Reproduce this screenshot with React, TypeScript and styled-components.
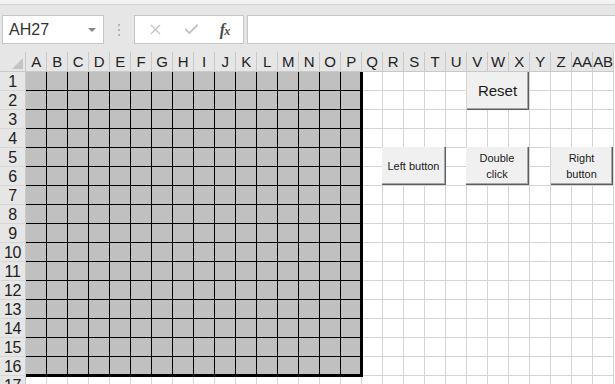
import React from "react";
import styled, { createGlobalStyle } from "styled-components";
import { X, Check } from "lucide-react";

const GlobalStyle = createGlobalStyle`
  html, body { margin: 0; padding: 0; background: #ffffff; }
  body { font-family: "Liberation Sans", Arial, sans-serif; }
  * { box-sizing: border-box; }
`;

const Page = styled.div`
  width: 615px;
  height: 384px;
  overflow: hidden;
  display: flex;
  flex-direction: column;
  background: #ffffff;
`;

const TitleStrip = styled.div`
  height: 5px;
  background: #f3f3f3;
  border-bottom: 1px solid #d4d4d4;
  flex: none;
`;

const Toolbar = styled.div`
  flex: none;
  height: 47px;
  background: #e6e6e6;
  display: flex;
  align-items: flex-start;
  padding: 10px 0 0 2px;
`;

const NameBox = styled.div`
  width: 102px;
  height: 29px;
  background: #ffffff;
  border: 1px solid #c6c6c6;
  display: flex;
  align-items: center;
  justify-content: space-between;
  padding: 0 7px 0 6px;
  font-size: 16px;
  color: #333333;
`;

const Caret = styled.span`
  width: 0;
  height: 0;
  border-left: 4px solid transparent;
  border-right: 4px solid transparent;
  border-top: 4px solid #858585;
`;

const Grip = styled.div`
  width: 30px;
  height: 29px;
  display: flex;
  flex-direction: column;
  align-items: center;
  justify-content: center;
  gap: 3px;
`;

const GripDot = styled.span`
  width: 2px;
  height: 2px;
  background: #b4b4b4;
`;

const FxBox = styled.div`
  width: 110px;
  height: 29px;
  background: #ffffff;
  border: 1px solid #c6c6c6;
  display: flex;
  align-items: center;
  justify-content: space-around;
  padding: 0 4px 0 2px;
  color: #c2c2c2;
`;

const FxLabel = styled.span`
  font-family: "Liberation Serif", "Times New Roman", serif;
  font-style: italic;
  font-weight: bold;
  font-size: 16px;
  color: #4a4a4a;
  letter-spacing: -1px;
`;

const FxSub = styled.span`
  font-size: 12px;
`;

const FormulaInput = styled.div`
  flex: 1;
  height: 29px;
  margin-left: 3px;
  background: #ffffff;
  border: 1px solid #c6c6c6;
  border-right: none;
`;

const Sheet = styled.div`
  position: relative;
  display: grid;
  grid-template-columns: 26px repeat(28, 21px);
  grid-template-rows: 20px repeat(17, 19px);
  background: #ffffff;
`;

const HeaderCell = styled.div<{ $corner?: boolean }>`
  background: #e6e6e6;
  border-right: 1px solid #c9c9c9;
  border-bottom: 1px solid #c9c9c9;
  display: flex;
  align-items: flex-end;
  justify-content: center;
  padding-bottom: 1px;
  font-size: 15px;
  color: #222222;
  white-space: nowrap;
  overflow: visible;
  letter-spacing: ${(p) => (p.$corner ? "0" : "-0.3px")};
  position: relative;
`;

const CornerTriangle = styled.span`
  position: absolute;
  right: 2px;
  bottom: 2px;
  width: 0;
  height: 0;
  border-left: 11px solid transparent;
  border-bottom: 11px solid #c4c4c4;
`;

const RowHead = styled.div`
  background: #e6e6e6;
  border-right: 1px solid #c9c9c9;
  border-bottom: 1px solid #d6d6d6;
  display: flex;
  align-items: center;
  justify-content: center;
  font-size: 16px;
  color: #222222;
  padding-top: 2px;
  letter-spacing: -0.3px;
`;

const Cell = styled.div<{ $gray: boolean; $thickRight: boolean; $thickBottom: boolean }>`
  background: ${(p) => (p.$gray ? "#c0c0c0" : "transparent")};
  border-right: ${(p) => (p.$thickRight ? "2px" : "1px")} solid
    ${(p) => (p.$gray ? "#000000" : "#d4d4d4")};
  border-bottom: ${(p) => (p.$thickBottom ? "2px" : "1px")} solid
    ${(p) => (p.$gray ? "#000000" : "#d4d4d4")};
  ${(p) =>
    p.$thickRight || p.$thickBottom
      ? `position: relative; z-index: 1; box-shadow: ${p.$thickRight ? "1px" : "0"} ${
          p.$thickBottom ? "1px" : "0"
        } 0 0 #000000${p.$thickRight && p.$thickBottom ? ", 1px 0 0 0 #000000, 0 1px 0 0 #000000" : ""};`
      : ""}
`;

const SheetButton = styled.div<{ $size: number }>`
  position: absolute;
  z-index: 2;
  background: #f0f0f0;
  border-right: 1px solid #5c5c5c;
  border-bottom: 1px solid #5c5c5c;
  box-shadow: inset -1px -1px 0 #a8a8a8;
  display: flex;
  align-items: center;
  justify-content: center;
  text-align: center;
  font-size: ${(p) => p.$size}px;
  line-height: 16px;
  color: #1a1a1a;
  padding: 0 2px;
`;

const columns = [
  "A","B","C","D","E","F","G","H","I","J","K","L","M","N",
  "O","P","Q","R","S","T","U","V","W","X","Y","Z","AA","AB",
];

const buttons = [
  { label: "Reset", left: 467, top: 20, width: 62, height: 38, size: 15 },
  { label: "Left button", left: 382, top: 95, width: 64, height: 38, size: 11 },
  { label: "Double\nclick", left: 466, top: 95, width: 63, height: 38, size: 11 },
  { label: "Right\nbutton", left: 551, top: 95, width: 62, height: 38, size: 11 },
];

export default function App() {
  const rows = Array.from({ length: 17 }, (_, i) => i + 1);
  return (
    <>
      <GlobalStyle />
      <Page>
        <TitleStrip />
        <Toolbar>
          <NameBox>
            <span>AH27</span>
            <Caret />
          </NameBox>
          <Grip>
            <GripDot />
            <GripDot />
            <GripDot />
          </Grip>
          <FxBox>
            <X size={17} strokeWidth={1.6} />
            <Check size={17} strokeWidth={2.6} />
            <FxLabel>
              f<FxSub>x</FxSub>
            </FxLabel>
          </FxBox>
          <FormulaInput />
        </Toolbar>
        <Sheet>
          <HeaderCell $corner>
            <CornerTriangle />
          </HeaderCell>
          {columns.map((c) => (
            <HeaderCell key={c}>{c}</HeaderCell>
          ))}
          {rows.map((r) => (
            <React.Fragment key={r}>
              <RowHead>{r}</RowHead>
              {columns.map((c, ci) => {
                const gray = r <= 16 && ci <= 15;
                return (
                  <Cell
                    key={c}
                    $gray={gray}
                    $thickRight={gray && ci === 15}
                    $thickBottom={gray && r === 16}
                  />
                );
              })}
            </React.Fragment>
          ))}
          {buttons.map((b) => (
            <SheetButton
              key={b.label}
              $size={b.size}
              style={{ left: b.left, top: b.top, width: b.width, height: b.height }}
            >
              <span>
                {b.label.split("\n").map((line, i) => (
                  <React.Fragment key={i}>
                    {i > 0 && <br />}
                    {line}
                  </React.Fragment>
                ))}
              </span>
            </SheetButton>
          ))}
        </Sheet>
      </Page>
    </>
  );
}
